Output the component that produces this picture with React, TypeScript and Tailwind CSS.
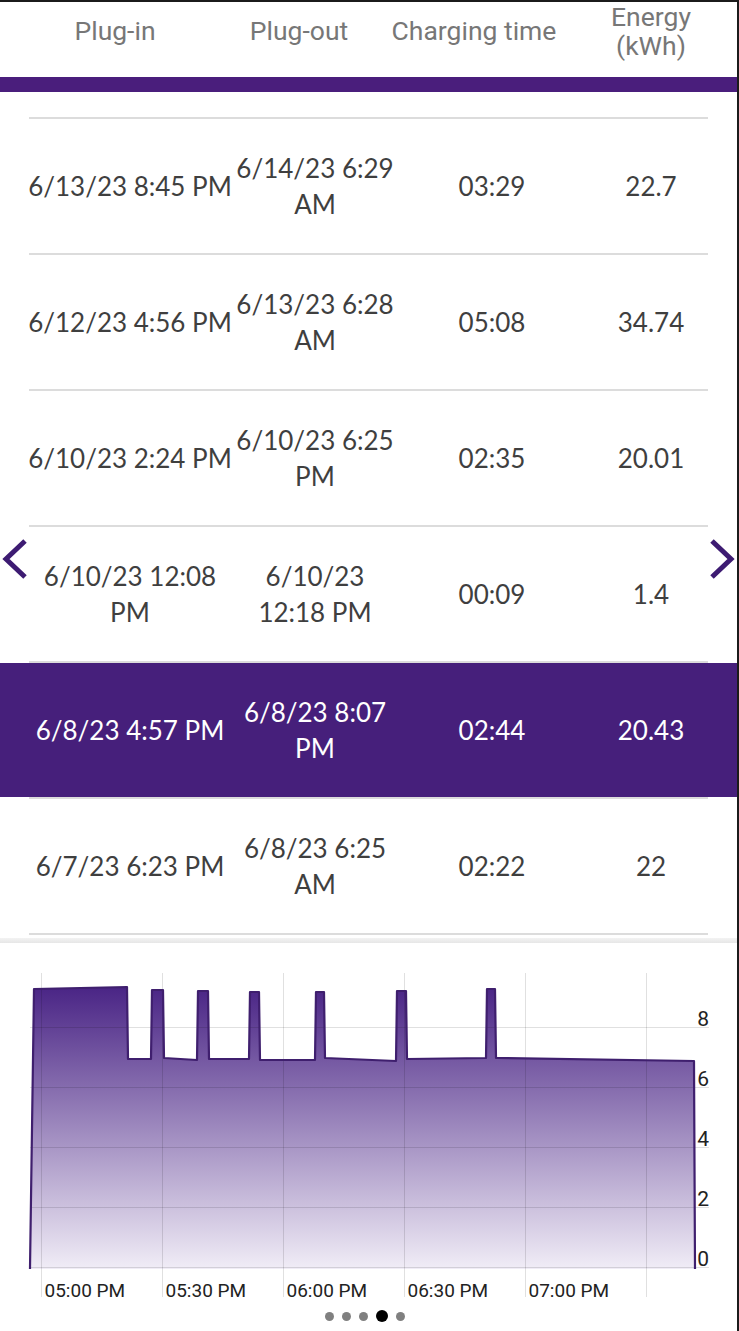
import React from 'react';

type Session = { plugIn: string; plugOut: string; time: string; energy: string; active?: boolean };

const sessions: Session[] = [
  { plugIn: '6/13/23 8:45 PM', plugOut: '6/14/23 6:29 AM', time: '03:29', energy: '22.7' },
  { plugIn: '6/12/23 4:56 PM', plugOut: '6/13/23 6:28 AM', time: '05:08', energy: '34.74' },
  { plugIn: '6/10/23 2:24 PM', plugOut: '6/10/23 6:25 PM', time: '02:35', energy: '20.01' },
  { plugIn: '6/10/23 12:08 PM', plugOut: '6/10/23 12:18 PM', time: '00:09', energy: '1.4' },
  { plugIn: '6/8/23 4:57 PM', plugOut: '6/8/23 8:07 PM', time: '02:44', energy: '20.43', active: true },
  { plugIn: '6/7/23 6:23 PM', plugOut: '6/8/23 6:25 AM', time: '02:22', energy: '22' },
];

// charging power curve, page coordinates (viewBox starts at y=943)
const curve =
  'M30 1269 L34 989 L127 987 L128 1059 L151 1059 L152 990 L163 990 L164 1058 L197 1060 L198 991 L208 991 L209 1059 ' +
  'L249 1059 L250 992 L259 992 L260 1060 L315 1060 L316 992 L324 992 L325 1058 L396 1061 L397 991 L406 991 L407 1059 ' +
  'L486 1058 L487 989 L495 989 L496 1058 L694 1061 L695 1269';

const yTicks = [
  { v: '8', y: 1027 },
  { v: '6', y: 1087 },
  { v: '4', y: 1147 },
  { v: '2', y: 1207 },
  { v: '0', y: 1267 },
];
const xGrid = [41.5, 162.5, 283.5, 404.5, 525.5, 646.5];
const xLabels = ['05:00 PM', '05:30 PM', '06:00 PM', '06:30 PM', '07:00 PM'];

function Chevron({ dir }: { dir: 'left' | 'right' }) {
  return (
    <svg width="28" height="44" viewBox="0 0 28 44" fill="none">
      <path
        d={dir === 'left' ? 'M24 4 L5 22 L24 40' : 'M4 4 L23 22 L4 40'}
        stroke="#3d1b72"
        strokeWidth="5"
      />
    </svg>
  );
}

function PowerChart() {
  return (
    <svg width="739" height="362" viewBox="0 943 739 362" className="block">
      <defs>
        <linearGradient id="fill" x1="0" y1="989" x2="0" y2="1268" gradientUnits="userSpaceOnUse">
          <stop offset="0" stopColor="#4b2686" />
          <stop offset="1" stopColor="#f0ecf6" />
        </linearGradient>
      </defs>
      <path d={curve + ' Z'} fill="url(#fill)" />
      {yTicks.map((t) => (
        <line key={t.v} x1="30" x2="709" y1={t.y + 0.5} y2={t.y + 0.5} stroke="rgba(0,0,0,0.12)" strokeWidth="1" />
      ))}
      {xGrid.map((x) => (
        <line key={x} x1={x} x2={x} y1="973" y2="1297" stroke="rgba(0,0,0,0.12)" strokeWidth="1" />
      ))}
      <path d={curve} fill="none" stroke="#3f1f6e" strokeWidth="2.2" strokeLinejoin="round" />
      {yTicks.map((t) => (
        <text
          key={t.v}
          x="709"
          y={t.y - 1}
          textAnchor="end"
          fontSize="21"
          fill="#222"
          fontFamily="Roboto, 'Liberation Sans', sans-serif"
        >
          {t.v}
        </text>
      ))}
      {xLabels.map((l, i) => (
        <text
          key={l}
          x={xGrid[i] + 3}
          y="1297"
          fontSize="19"
          fill="#222"
          fontFamily="Roboto, 'Liberation Sans', sans-serif"
        >
          {l}
        </text>
      ))}
    </svg>
  );
}

export default function App() {
  return (
    <div className="w-[739px] h-[1331px] bg-white overflow-hidden border-t-2 border-r-2 border-[#1b1b1b] flex flex-col">
      {/* header */}
      <div className="h-[75px] pb-[18px] flex items-center text-[26.5px] leading-[29px] text-[#777] font-['Roboto','Liberation_Sans',sans-serif]">
        <div className="w-[230px] text-center">Plug-in</div>
        <div className="w-[138px] text-center">Plug-out</div>
        <div className="w-[212px] text-center">Charging time</div>
        <div className="ml-[11px] w-[120px] text-center">Energy (kWh)</div>
      </div>
      <div className="h-[15px] bg-[#4a1e7c]" />
      <div className="h-[25px]" />

      {/* sessions table */}
      <div className="relative font-['Lato','Noto_Sans',sans-serif] text-[26px] leading-[36px]">
        {sessions.map((s) => (
          <div key={s.plugIn}>
            <div className="mx-[29px] h-[2px] bg-[#dcdcdc]" />
            <div className={`h-[134px] flex items-center ${s.active ? 'bg-[#461f7b] text-white' : 'text-[#3f3f3f]'}`}>
              <div className="ml-[27px] w-[206px] text-center">{s.plugIn}</div>
              <div className="ml-[0px] w-[164px] text-center">{s.plugOut}</div>
              <div className="ml-[20px] w-[150px] text-center">{s.time}</div>
              <div className="ml-[24px] w-[120px] text-center">{s.energy}</div>
            </div>
          </div>
        ))}
        <div className="mx-[29px] h-[2px] bg-[#dcdcdc]" />

        <div className="absolute left-[1px] top-[420px]">
          <Chevron dir="left" />
        </div>
        <div className="absolute right-[1px] top-[420px]">
          <Chevron dir="right" />
        </div>
      </div>

      <div className="h-[3px]" />
      <div className="h-[5px] bg-gradient-to-b from-[#f3f3f3] to-[#e6e6e6]" />

      {/* chart card */}
      <div className="flex-1 flex flex-col">
        <PowerChart />
        <div className="h-[22px] flex items-center justify-center gap-[8px] pr-[8px]">
          <span className="w-[9px] h-[9px] rounded-full bg-[#808080]" />
          <span className="w-[9px] h-[9px] rounded-full bg-[#808080]" />
          <span className="w-[9px] h-[9px] rounded-full bg-[#808080]" />
          <span className="w-[12px] h-[12px] rounded-full bg-black" />
          <span className="w-[9px] h-[9px] rounded-full bg-[#808080]" />
        </div>
      </div>
    </div>
  );
}
